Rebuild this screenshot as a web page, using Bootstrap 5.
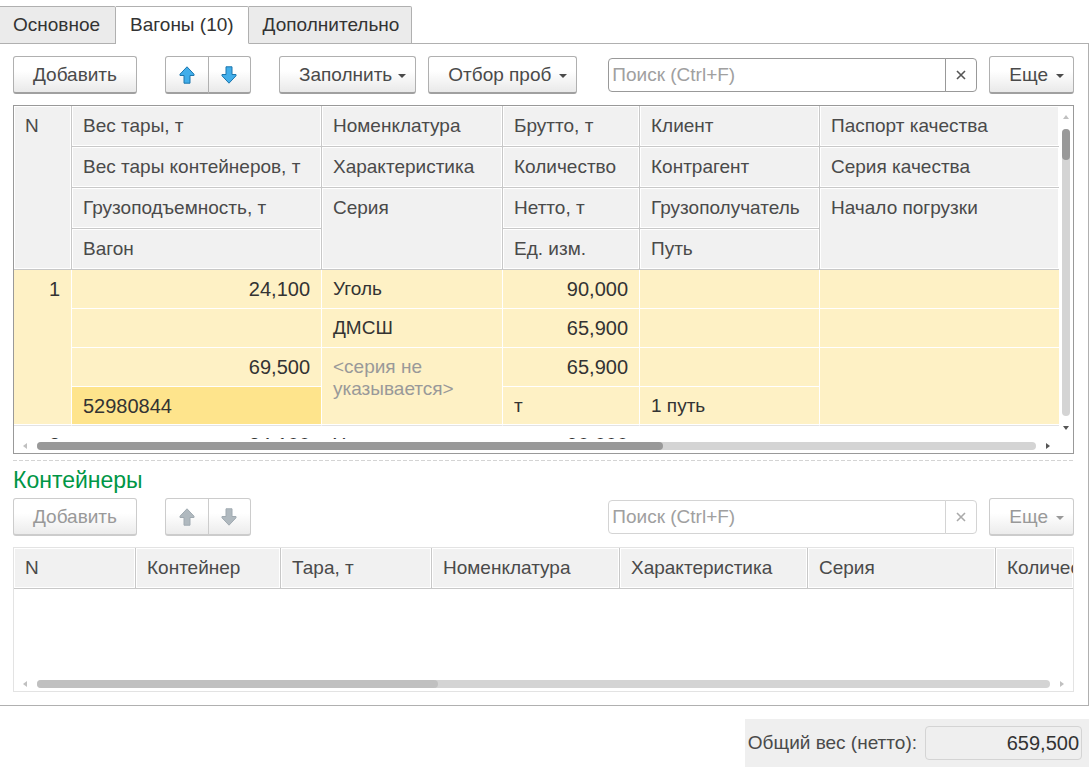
<!DOCTYPE html>
<html lang="ru">
<head>
<meta charset="utf-8">
<meta name="viewport" content="width=device-width, initial-scale=1">
<title>Вагоны</title>
<link href="https://cdn.jsdelivr.net/npm/bootstrap@5.3.0/dist/css/bootstrap.min.css" rel="stylesheet">
<style>
:root{--line:#b0b0b0;--ink:#4a4a4a;--cell-line:#c8c8c8;--track:#d4d4d4;--thumb:#999;--arrow-off:#c0c0c0}
body{font-family:"Liberation Sans",Arial,sans-serif;font-size:19px;line-height:22px;color:var(--ink);background:#fff}
.page{padding:6px 3px 5px 0}
.form-tabs{border:0;position:relative;z-index:1}
.form-tabs .nav-link{height:38px;margin:0;padding:0 14px;border:1px solid var(--line);border-left:0;border-radius:0 2px 0 0;background:#ebebeb;color:#333;line-height:36px}
.form-tabs .nav-item:first-child .nav-link{padding:0 15px 0 13px}
.form-tabs .nav-item:last-child .nav-link{padding-right:12px}
.form-tabs .nav-link.active{background:#fff;border-color:var(--line);border-bottom-color:#fff;color:#333}
.form-panel{margin-top:-1px;border:1px solid var(--line);border-left:0;padding:12px 14px 13px 13px}
.btn-form{height:38px;padding:0 19px;border:1px solid var(--line);border-bottom:2px solid #a0a0a0;border-radius:3px;font-size:19px;line-height:34px;color:var(--ink);background:linear-gradient(#fff 40%,#e9e9e9)}
.btn-form.dropdown-toggle{padding-right:9px}
.btn-form.dropdown-toggle::after{margin-left:8px;vertical-align:3px;border-width:4px 4px 0}
.btn-form.btn-fill::after{margin-left:6px}
.btn-form:disabled{opacity:1;color:#999;border-color:#ccc;background:linear-gradient(#fff 40%,#ececec)}
.toolbar-gap{margin-left:28px}
.btn-arrow{width:44px;padding:0;display:flex;align-items:center;justify-content:center}
.btn-arrow + .btn-arrow{width:43px}
.btn-arrow svg{fill:#42aeea;stroke:#1c76ad}
.btn-arrow:disabled svg{fill:#b0b9bf;stroke:#a0aab1}
.search{flex:0 1 369px;margin-left:30px;height:34px;flex-wrap:nowrap}
.search .form-control{padding:0 3px;font-size:19px;border:1px solid #999;border-radius:4px;height:34px}
.search .form-control::placeholder{color:#a0a0a0}
.search .btn{width:32px;padding:0;border:1px solid #999;border-radius:4px;display:flex;align-items:center;justify-content:center;color:#555}
.search .form-control:disabled,.search .btn:disabled{background:#fff;border-color:#d4d4d4;opacity:1;color:#aaa}
.more{margin-left:12px}
.gridbox{margin-top:11px;border:1px solid #999;background:#fff}
.gridbox.off{border-color:#e3e3e3}
.view{flex:1 1 0;min-width:0;overflow:hidden}
.view-wagons{height:333px}
.view-containers{height:129px}
.data{width:100%;table-layout:fixed;border-collapse:separate;border-spacing:0}
.data th{height:41px;padding:0 11px;font-weight:400;vertical-align:top;line-height:39px;white-space:nowrap;overflow:hidden;background:#f1f1f1;border-right:1px solid var(--cell-line);border-bottom:1px solid var(--cell-line);box-shadow:inset 0 0 0 1px #fff}
.data td{height:39px;padding:8px 11px 0;vertical-align:top;color:#333;border-right:1px solid #fff;border-bottom:1px solid #fff}
.data .edge{border-right:0}
.data td.num{text-align:right;font-size:20px}
.data td.code{font-size:20px}
.picked td{background:#fef1c5}
.picked td.current{background:#fee48c}
.picked td.hint{color:#999}
tr.rowend td,.data td.rowend{border-bottom:1px solid #e3e3e3;box-shadow:inset 0 -1px 0 #fff}
.bar-x{height:14px;padding:0 9px;align-items:center}
.bar-x .rail{flex:1 1 auto;margin:0 10px}
.bar-x.corner{padding-right:23px}
.bar-y{width:14px;padding:9px 0;align-items:center}
.bar-y .rail{flex:1 1 auto;margin:10px 0}
.rail{background:var(--track);border-radius:4px}
.bar-x .rail{height:8px}
.bar-y .rail{width:8px}
.grip{background:var(--thumb);border-radius:4px;height:8px}
.bar-y .grip{width:8px}
.off .grip{background:#c0c0c0}
.tri{display:block;flex:none;fill:#555}
.tri.dim{fill:var(--arrow-off)}
.split{height:1px;margin:6px 0 8px;background:repeating-linear-gradient(90deg,#d4d4d4 0 4px,transparent 4px 6px)}
.group-title{font-size:23px;line-height:22px;color:#009646;margin:0 0 7px}
.totals{background:#efefef;padding:7px 7px 7px 3px;margin-top:13px}
.totals .form-control{width:157px;height:34px;padding:0 2px;border:1px solid #d4d4d4;border-radius:4px;background:#efefef;color:#333;font-size:20px;text-align:right}
</style>
</head>
<body>
<main class="page">
  <ul class="nav nav-tabs form-tabs" role="tablist">
    <li class="nav-item"><button type="button" class="nav-link" role="tab">Основное</button></li>
    <li class="nav-item"><button type="button" class="nav-link active" role="tab" aria-selected="true">Вагоны (10)</button></li>
    <li class="nav-item"><button type="button" class="nav-link" role="tab">Дополнительно</button></li>
  </ul>

  <section class="form-panel">
    <div class="d-flex align-items-center">
      <button type="button" class="btn btn-form">Добавить</button>
      <div class="btn-group toolbar-gap">
        <button type="button" class="btn btn-form btn-arrow" aria-label="Вверх"><svg width="16" height="18" viewBox="0 0 16 18"><path d="M8 .8 15 8.200V9.500H11V17.200H5V9.500H1V8.200Z" stroke-linejoin="round"/></svg></button>
        <button type="button" class="btn btn-form btn-arrow" aria-label="Вниз"><svg width="16" height="18" viewBox="0 0 16 18"><path d="M8 17.200 15 9.800V8.500H11V.8H5V8.500H1V9.800Z" stroke-linejoin="round"/></svg></button>
      </div>
      <button type="button" class="btn btn-form btn-fill dropdown-toggle toolbar-gap">Заполнить</button>
      <button type="button" class="btn btn-form dropdown-toggle more">Отбор проб</button>
      <div class="input-group search ms-auto">
        <input type="text" class="form-control" placeholder="Поиск (Ctrl+F)" aria-label="Поиск">
        <button type="button" class="btn" aria-label="Очистить"><svg width="10" height="10" viewBox="0 0 10 10"><path d="M1 1 9 9M9 1 1 9" stroke="currentColor" stroke-width="1.600"/></svg></button>
      </div>
      <button type="button" class="btn btn-form dropdown-toggle more">Еще</button>
    </div>

    <div class="gridbox">
      <div class="d-flex">
        <div class="view view-wagons">
          <table class="data">
            <colgroup><col style="width:58px"><col style="width:250px"><col style="width:181px"><col style="width:137px"><col style="width:180px"><col></colgroup>
            <thead>
              <tr><th rowspan="4">N</th><th>Вес тары, т</th><th>Номенклатура</th><th>Брутто, т</th><th>Клиент</th><th class="edge">Паспорт качества</th></tr>
              <tr><th>Вес тары контейнеров, т</th><th>Характеристика</th><th>Количество</th><th>Контрагент</th><th class="edge">Серия качества</th></tr>
              <tr><th>Грузоподъемность, т</th><th rowspan="2">Серия</th><th>Нетто, т</th><th>Грузополучатель</th><th rowspan="2" class="edge">Начало погрузки</th></tr>
              <tr><th>Вагон</th><th>Ед. изм.</th><th>Путь</th></tr>
            </thead>
            <tbody class="picked">
              <tr><td rowspan="4" class="num rowend">1</td><td class="num">24,100</td><td>Уголь</td><td class="num">90,000</td><td></td><td class="edge"></td></tr>
              <tr><td></td><td>ДМСШ</td><td class="num">65,900</td><td></td><td class="edge"></td></tr>
              <tr><td class="num">69,500</td><td rowspan="2" class="hint rowend">&lt;серия не указывается&gt;</td><td class="num">65,900</td><td></td><td rowspan="2" class="rowend edge"></td></tr>
              <tr class="rowend"><td class="code current">52980844</td><td>т</td><td>1 путь</td></tr>
            </tbody>
            <tbody>
              <tr><td class="num">2</td><td class="num">24,100</td><td>Уголь</td><td class="num">90,000</td><td></td><td class="edge"></td></tr>
            </tbody>
          </table>
        </div>
        <div class="bar-y d-flex flex-column">
          <svg class="tri dim" width="6" height="4"><path d="M0 4 3 0 6 4Z"/></svg>
          <div class="rail"><div class="grip" style="height:31px"></div></div>
          <svg class="tri" width="6" height="4"><path d="M0 0 3 4 6 0Z"/></svg>
        </div>
      </div>
      <div class="bar-x corner d-flex">
        <svg class="tri dim" width="4" height="6"><path d="M4 0 0 3 4 6Z"/></svg>
        <div class="rail"><div class="grip" style="width:62.700%"></div></div>
        <svg class="tri" width="4" height="6"><path d="M0 0 4 3 0 6Z"/></svg>
      </div>
    </div>

    <div class="split"></div>

    <h2 class="group-title">Контейнеры</h2>
    <div class="d-flex align-items-center">
      <button type="button" class="btn btn-form" disabled>Добавить</button>
      <div class="btn-group toolbar-gap">
        <button type="button" class="btn btn-form btn-arrow" aria-label="Вверх" disabled><svg width="16" height="18" viewBox="0 0 16 18"><path d="M8 .8 15 8.200V9.500H11V17.200H5V9.500H1V8.200Z" stroke-linejoin="round"/></svg></button>
        <button type="button" class="btn btn-form btn-arrow" aria-label="Вниз" disabled><svg width="16" height="18" viewBox="0 0 16 18"><path d="M8 17.200 15 9.800V8.500H11V.8H5V8.500H1V9.800Z" stroke-linejoin="round"/></svg></button>
      </div>
      <div class="input-group search ms-auto">
        <input type="text" class="form-control" placeholder="Поиск (Ctrl+F)" aria-label="Поиск" disabled>
        <button type="button" class="btn" aria-label="Очистить" disabled><svg width="10" height="10" viewBox="0 0 10 10"><path d="M1 1 9 9M9 1 1 9" stroke="currentColor" stroke-width="1.600"/></svg></button>
      </div>
      <button type="button" class="btn btn-form dropdown-toggle more" disabled>Еще</button>
    </div>

    <div class="gridbox off">
      <div class="view view-containers">
        <table class="data">
          <colgroup><col style="width:122px"><col style="width:145px"><col style="width:151px"><col style="width:188px"><col style="width:188px"><col style="width:188px"><col></colgroup>
          <thead><tr><th>N</th><th>Контейнер</th><th>Тара, т</th><th>Номенклатура</th><th>Характеристика</th><th>Серия</th><th class="edge pe-0">Количество</th></tr></thead>
        </table>
      </div>
      <div class="bar-x d-flex">
        <svg class="tri dim" width="4" height="6"><path d="M4 0 0 3 4 6Z"/></svg>
        <div class="rail"><div class="grip" style="width:39.600%"></div></div>
        <svg class="tri dim" width="4" height="6"><path d="M0 0 4 3 0 6Z"/></svg>
      </div>
    </div>
  </section>

  <div class="d-flex justify-content-end">
    <div class="totals d-flex align-items-center gap-2">
      <label for="total">Общий вес (нетто):</label>
      <input id="total" type="text" class="form-control" value="659,500" readonly>
    </div>
  </div>
</main>
<script src="https://cdn.jsdelivr.net/npm/bootstrap@5.3.0/dist/js/bootstrap.bundle.min.js"></script>
</body>
</html>
